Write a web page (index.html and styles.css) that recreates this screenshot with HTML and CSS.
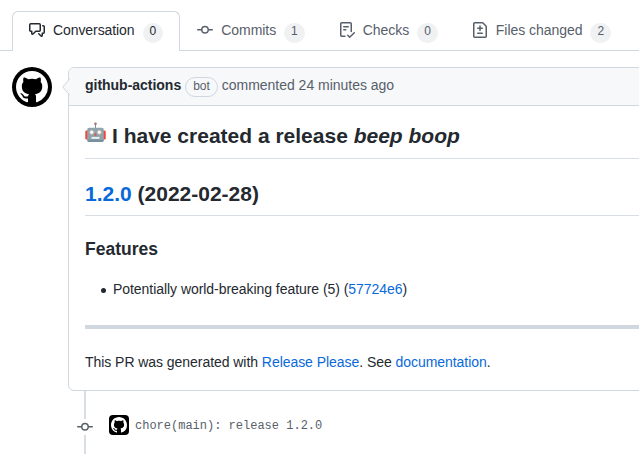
FILE: index.html
```html
<!DOCTYPE html>
<html lang="en">
<head>
<meta charset="utf-8">
<title>Pull request</title>
<link rel="stylesheet" href="styles.css">
</head>
<body>
<svg class="defs" aria-hidden="true">
  <symbol id="mark" viewBox="0 0 16 16"><path fill-rule="evenodd" d="M8 0C3.58 0 0 3.58 0 8c0 3.54 2.29 6.53 5.47 7.59.4.07.55-.17.55-.38 0-.19-.01-.82-.01-1.49-2.01.37-2.53-.49-2.69-.94-.09-.23-.48-.94-.82-1.13-.28-.15-.68-.52-.01-.53.63-.01 1.08.58 1.23.82.72 1.21 1.87.87 2.33.66.07-.52.28-.87.51-1.07-1.78-.2-3.64-.89-3.64-3.95 0-.87.31-1.59.82-2.15-.08-.2-.36-1.02.08-2.12 0 0 .67-.21 2.2.82.64-.18 1.32-.27 2-.27.68 0 1.36.09 2 .27 1.53-1.04 2.2-.82 2.2-.82.44 1.1.16 1.92.08 2.12.51.56.82 1.27.82 2.15 0 3.07-1.87 3.75-3.65 3.95.29.25.54.73.54 1.48 0 1.07-.01 1.93-.01 2.2 0 .21.15.46.55.38A8.013 8.013 0 0016 8c0-4.42-3.58-8-8-8z"/></symbol>
  <symbol id="commit" viewBox="0 0 16 16"><path fill-rule="evenodd" d="M10.5 7.75a2.5 2.5 0 11-5 0 2.5 2.5 0 015 0zm1.43.75a4.002 4.002 0 01-7.86 0H.75a.75.75 0 110-1.5h3.32a4.001 4.001 0 017.86 0h3.32a.75.75 0 110 1.5h-3.32z"/></symbol>
</svg>
<nav class="tabs">
  <a class="tab selected">
    <svg class="icon" viewBox="0 0 16 16"><path fill-rule="evenodd" d="M1.5 2.75a.25.25 0 01.25-.25h8.5a.25.25 0 01.25.25v5.5a.25.25 0 01-.25.25h-3.5a.75.75 0 00-.53.22L3.5 11.44V9.25a.75.75 0 00-.75-.75h-1a.25.25 0 01-.25-.25v-5.5zM1.75 1A1.75 1.75 0 000 2.75v5.5C0 9.216.784 10 1.75 10H2v1.543a1.457 1.457 0 002.487 1.03L7.061 10h3.189A1.75 1.75 0 0012 8.25v-5.5A1.75 1.75 0 0010.25 1h-8.5zM14.5 4.75a.25.25 0 00-.25-.25h-.5a.75.75 0 110-1.5h.5c.966 0 1.75.784 1.75 1.75v5.5A1.75 1.75 0 0114.25 12H14v1.543a1.457 1.457 0 01-2.487 1.03L9.22 12.28a.75.75 0 111.06-1.06l2.22 2.22v-2.19a.75.75 0 01.75-.75h1a.25.25 0 00.25-.25v-5.5z"/></svg>
    <span class="name">Conversation</span><span class="counter">0</span>
  </a>
  <a class="tab">
    <svg class="icon"><use href="#commit"/></svg>
    <span class="name">Commits</span><span class="counter">1</span>
  </a>
  <a class="tab">
    <svg class="icon" viewBox="0 0 16 16"><path fill-rule="evenodd" d="M2.5 1.75a.25.25 0 01.25-.25h8.5a.25.25 0 01.25.25v7.736a.75.75 0 101.5 0V1.75A1.75 1.75 0 0011.25 0h-8.5A1.75 1.75 0 001 1.75v11.5c0 .966.784 1.75 1.75 1.75h3.17a.75.75 0 000-1.5H2.75a.25.25 0 01-.25-.25V1.75zM4.75 4a.75.75 0 000 1.5h4.5a.75.75 0 000-1.5h-4.5zM4 7.75A.75.75 0 014.75 7h2a.75.75 0 010 1.5h-2A.75.75 0 014 7.75zm11.774 3.537a.75.75 0 00-1.048-1.074L10.7 14.145 9.281 12.72a.75.75 0 00-1.062 1.058l1.943 1.95a.75.75 0 001.055.008l4.557-4.45z"/></svg>
    <span class="name">Checks</span><span class="counter">0</span>
  </a>
  <a class="tab">
    <svg class="icon" viewBox="0 0 16 16"><path fill-rule="evenodd" d="M2.75 1.5a.25.25 0 00-.25.25v12.5c0 .138.112.25.25.25h10.5a.25.25 0 00.25-.25V4.664a.25.25 0 00-.073-.177l-2.914-2.914a.25.25 0 00-.177-.073H2.75zM1 1.75C1 .784 1.784 0 2.75 0h7.586c.464 0 .909.184 1.237.513l2.914 2.914c.329.328.513.773.513 1.237v9.586A1.75 1.75 0 0113.25 16H2.75A1.75 1.75 0 011 14.25V1.75zm7 1.5a.75.75 0 01.75.75v1.500h1.500a.75.75 0 010 1.500h-1.500v1.500a.75.75 0 01-1.500 0V7h-1.500a.75.75 0 010-1.500h1.500V4A.75.75 0 018 3.250zm-3 8a.75.75 0 01.75-.75h4.500a.75.75 0 010 1.500h-4.500a.75.75 0 01-.75-.75z"/></svg>
    <span class="name">Files changed</span><span class="counter">2</span>
  </a>
</nav>
<main class="discussion">
  <div class="avatar"><svg><use href="#mark"/></svg></div>
  <div class="thread">
    <article class="comment">
      <svg class="caret" viewBox="0 0 8 18"><path d="M8 .5L.7 9 8 17.5"/></svg>
      <header class="comment-header"><strong>github-actions</strong><span class="bot">bot</span><span>commented 24 minutes ago</span></header>
      <div class="body">
        <h2 class="intro"><svg class="robot" viewBox="0 0 21 21">
          <path d="M10.5 2v5" stroke="#78909c" stroke-width="1"/><circle cx="10.5" cy="1.700" r="1.300" fill="#a46f79"/>
          <rect x=".3" y="8.500" width="3" height="9" rx="1.200" fill="#f44336"/><rect x="17.700" y="8.500" width="3" height="9" rx="1.200" fill="#f44336"/>
          <path d="M4.200 5.800h12.600q2 0 2 2V18q0 2-2 2H4.200q-2 0-2-2V7.800q0-2 2-2z" fill="#90a4ae"/>
          <path d="M2.200 17.800h16.600q0 2.200-2 2.200H4.200q-2 0-2-2.200z" fill="#78909c"/>
          <circle cx="6.700" cy="10.300" r="2" fill="#fff" stroke="#c4b3a2" stroke-width=".7"/><circle cx="14.300" cy="10.300" r="2" fill="#fff" stroke="#c4b3a2" stroke-width=".7"/>
          <path d="M10.500 10.800l1.400 2.600H9.100z" fill="#f04438"/><rect x="6" y="14.800" width="9" height="2.200" rx="1.100" fill="#fff" stroke="#607d8b" stroke-width=".4"/>
        </svg><span>I have created a release <em>beep boop</em></span></h2>
        <h2><a>1.2.0</a> (2022-02-28)</h2>
        <h3>Features</h3>
        <ul><li>Potentially world-breaking feature (5) (<a>57724e6</a>)</li></ul>
        <hr>
        <p>This PR was generated with <a>Release Please</a>. See <a>documentation</a>.</p>
      </div>
    </article>
    <div class="timeline">
      <div class="rail"><span class="badge"><svg class="icon"><use href="#commit"/></svg></span></div>
      <div class="mini"><svg><use href="#mark"/></svg></div>
      <code>chore(main): release 1.2.0</code>
    </div>
  </div>
</main>
</body>
</html>
```
FILE: styles.css
```css
* { box-sizing: border-box; }
html, body { overflow: hidden; height: 454px; }
body { margin: 0; background: #fff; color: #24292f; font: 14px/21px "Liberation Sans", Arial, sans-serif; }
.defs { position: absolute; width: 0; height: 0; }
a { color: #0969da; }
svg { display: block; flex: none; }
.icon { width: 16px; height: 16px; fill: currentColor; }

.tabs { display: flex; height: 51px; padding: 11px 0 0 12px; box-shadow: inset 0 -1px #d0d7de; }
.tab { display: flex; flex: none; height: 40px; padding: 11px 17px 0; color: #57606a; white-space: nowrap; }
.tab.selected { padding: 10px 16px 0; color: #24292f; background: #fff; border: 1px solid #d0d7de; border-bottom: 0; border-radius: 6px 6px 0 0; }
.tab .name { margin: -2px 8px 0; letter-spacing: -.05px; }
.tab.selected .name { letter-spacing: -.08px; }
.tab .counter { height: 20px; min-width: 20px; margin-top: 1px; padding: 0 7px; border-radius: 10px; background: #eff1f3; font-size: 12px; line-height: 17px; text-align: center; }

.discussion { display: flex; padding: 16px 0 0 12px; }
.avatar { display: grid; place-items: center; flex: none; width: 40px; height: 40px; border-radius: 50%; background: #000; fill: #fff; }
.avatar svg { width: 32px; height: 32px; }
.thread { width: 600px; flex: none; margin-left: 16px; }
.comment { position: relative; height: 324px; border: 1px solid #d0d7de; border-radius: 6px; }
.caret { position: absolute; left: -7px; top: 10px; width: 8px; height: 18px; fill: #f6f8fa; stroke: #d0d7de; }
.comment-header { display: flex; align-items: center; height: 38px; padding: 0 16px 2px; background: #f6f8fa; border-bottom: 1px solid #d0d7de; border-radius: 5px 5px 0 0; color: #57606a; letter-spacing: -.02px; }
.comment-header strong { color: #24292f; }
.bot { height: 20px; margin: 2px 4px 0; padding: 0 7px; border: 1px solid #d0d7de; border-radius: 10px; font-size: 12px; line-height: 17px; }
.body { padding: 16px; }
h2 { height: 33px; margin: 0 0 24px; border-bottom: 1px solid #d8dee4; font-size: 21px; line-height: 21px; }
.intro { display: flex; height: 37px; line-height: 27px; }
.robot { width: 21px; height: 21px; margin-right: 6px; }
h3 { height: 22px; margin: 0 0 16px; font-size: 17.5px; line-height: 18px; }
ul { height: 23px; margin: 0 0 24px; padding: 1px 0 0 15px; list-style: none; letter-spacing: -.05px; }
li { display: flex; align-items: center; white-space: pre; }
li::before { content: ""; width: 5px; height: 5px; margin: 1px 7px 0 1px; border-radius: 50%; background: currentColor; }
hr { height: 4px; margin: 0 0 24px; border: 0; background: #d0d7de; }
p { margin: 0; line-height: 19px; letter-spacing: -.05px; }

.timeline { display: flex; height: 63px; padding-left: 8px; }
.rail { display: flex; flex: none; align-items: center; width: 18px; background: linear-gradient(#d8dee4, #d8dee4) 8px 0 / 2px 100% no-repeat; }
.badge { height: 16px; margin: 8px 0 0 1px; background: #fff; color: #57606a; }
.mini { display: grid; place-items: center; flex: none; width: 20px; height: 20px; margin: 24px 6px 0 15px; border-radius: 4px; background: #000; fill: #fff; }
.mini svg { width: 16px; height: 16px; }
code { margin-top: 25px; color: #57606a; font: 12px/20px "Liberation Mono", monospace; white-space: nowrap; }
```
